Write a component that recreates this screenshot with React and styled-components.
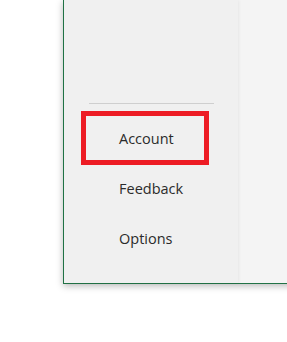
import styled, { createGlobalStyle } from 'styled-components';

const Global = createGlobalStyle`
  html, body {
    margin: 0;
    padding: 0;
    background: #ffffff;
    overflow: hidden;
  }
`;

const Page = styled.div`
  width: 287px;
  height: 342px;
  padding-left: 63px;
  box-sizing: border-box;
  overflow: hidden;
`;

const Window = styled.div`
  display: flex;
  height: 284px;
  width: 240px;
  box-sizing: border-box;
  border-left: 1px solid #217346;
  border-bottom: 1px solid #217346;
  box-shadow: 0 2px 7px rgba(0, 0, 0, 0.28);
  font-family: "Open Sans", "Noto Sans", sans-serif;
`;

const Sidebar = styled.nav`
  width: 174px;
  flex-shrink: 0;
  background: #f0f0f0;
  display: flex;
  flex-direction: column;
  justify-content: flex-end;
  padding-bottom: 20px;
  box-sizing: border-box;
  box-shadow: 1px 0 3px rgba(0, 0, 0, 0.06);
  position: relative;
  z-index: 1;
`;

const Divider = styled.hr`
  margin: 0 24px 9px 25px;
  border: none;
  border-top: 1px solid #cfcfcf;
  height: 0;
`;

const Item = styled.div`
  height: 50px;
  margin: 0 31px 0 19px;
  padding-left: 36px;
  display: flex;
  align-items: center;
  font-size: 14.5px;
  color: #2b2b2b;
  outline: ${(p) => (p.$marked ? '5px solid #ed1c24' : 'none')};
  outline-offset: -3px;
`;

const Content = styled.div`
  flex: 1;
  background: #f4f4f4;
`;

const App = () => {
  return (
    <>
      <Global />
      <Page>
        <Window>
          <Sidebar>
            <Divider />
            <Item $marked>Account</Item>
            <Item>Feedback</Item>
            <Item>Options</Item>
          </Sidebar>
          <Content />
        </Window>
      </Page>
    </>
  );
};

export default App;
